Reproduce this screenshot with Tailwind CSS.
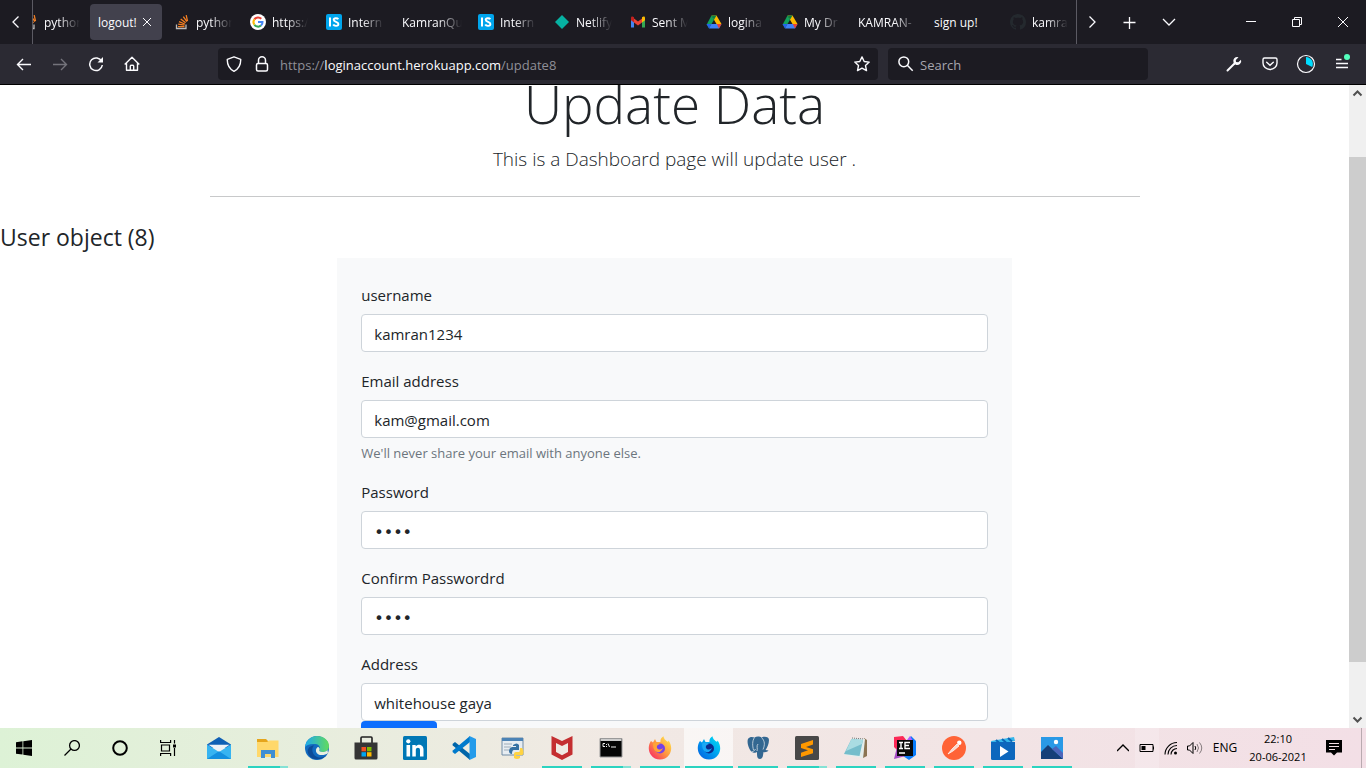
<!DOCTYPE html>
<html lang="en">
<head>
<meta charset="utf-8">
<meta name="viewport" content="width=device-width, initial-scale=1">
<title>Update Data</title>
<script src="https://cdn.jsdelivr.net/npm/@tailwindcss/browser@4"></script>
</head>
<body class="flex h-screen flex-col overflow-hidden bg-white font-['Open_Sans','Noto_Sans',sans-serif] text-[#212529]">

<!-- shared symbols -->
<svg class="hidden" aria-hidden="true">
  <symbol id="so" viewBox="0 0 16 16"><path d="M2.500 10.500v4h9.500v-4" fill="none" stroke="#bcbbbb" stroke-width="1.300"/><path d="M4 12.600h6.500M4.200 10.200l6.300.9M5 7.600l5.800 2.400M6.700 4.900l4.900 3.900M9.300 2.600l3.600 5M12.200 1.200l1.300 6" stroke="#f48024" stroke-width="1.300" fill="none"/></symbol>
  <symbol id="is" viewBox="0 0 16 16"><rect width="16" height="16" rx="2" fill="#00a5ec"/><path d="M4 3.500v9" stroke="#fff" stroke-width="2"/><path d="M12.300 5.200C11.500 3.900 7.700 3.600 7.700 5.800c0 2.500 4.700 1.500 4.700 4.200 0 2.400-4.200 2.300-5.200.6" stroke="#fff" stroke-width="1.900" fill="none"/></symbol>
  <symbol id="drive" viewBox="0 0 16 16"><path d="M5.500 1.500h5l5 8.500h-5z" fill="#ffba00"/><path d="M5.500 1.500L8 5.700 3 14.300.7 10.500z" fill="#12a15c"/><path d="M5.300 10h10.200L13 14.500H3z" fill="#3f83f8"/><path d="M5.500 1.500h5L8 5.700z" fill="#0b8043"/><path d="M10.800 10h4.700L13 14.500z" fill="#ea4335"/><path d="M3 14.500L5.400 10H.5z" fill="#2563eb"/></symbol>
</svg>

<header class="shrink-0 border-b border-black bg-[#2b2a33] text-[#fbfbfe]">
  <div class="flex h-11 items-stretch bg-[#1c1b22] text-xs">
    <button class="flex w-[33px] shrink-0 items-center justify-center border-r border-[#5b5a63]" aria-label="Scroll tabs left"><svg class="h-4 w-4" viewBox="0 0 16 16" fill="none" stroke="currentColor" stroke-width="1.300"><path d="M10.500 2.500L5 8l5.500 5.500"/></svg></button>
    <nav class="min-w-0 flex-1 overflow-hidden" aria-label="Tabs">
      <div class="-ml-[19px] flex h-full items-center gap-1">
        <button class="flex h-9 w-[72px] shrink-0 items-center gap-1.5 pl-2"><svg class="h-4 w-4 shrink-0"><use href="#so"/></svg><span class="w-9 overflow-hidden whitespace-nowrap pt-0.5 text-left mask-r-from-40%">python</span></button>
        <button class="flex h-9 w-[72px] shrink-0 items-center gap-1 rounded bg-[#42414d] pl-2"><span class="whitespace-nowrap pt-0.5">logout!</span><svg class="h-3 w-3 shrink-0" viewBox="0 0 12 12" stroke="currentColor"><path d="M2 2l8 8M10 2l-8 8"/></svg></button>
        <button class="flex h-9 w-[72px] shrink-0 items-center gap-1.5 pl-2"><svg class="h-4 w-4 shrink-0"><use href="#so"/></svg><span class="w-9 overflow-hidden whitespace-nowrap pt-0.5 text-left mask-r-from-40%">python</span></button>
        <button class="flex h-9 w-[72px] shrink-0 items-center gap-1.5 pl-2"><svg class="h-4 w-4 shrink-0" viewBox="0 0 16 16"><circle cx="8" cy="8" r="8" fill="#fff"/><g fill="none" stroke-width="2"><path d="M4.400 5.300A4.500 4.500 0 0 1 11.300 4.800" stroke="#ea4335"/><path d="M4.400 5.300a4.500 4.500 0 0 0 0 5.400" stroke="#fbbc05"/><path d="M4.400 10.700a4.500 4.500 0 0 0 6.600.9" stroke="#34a853"/><path d="M11 11.600A4.500 4.500 0 0 0 12.500 8H8" stroke="#4285f4"/></g></svg><span class="w-9 overflow-hidden whitespace-nowrap pt-0.5 text-left mask-r-from-40%">https:/</span></button>
        <button class="flex h-9 w-[72px] shrink-0 items-center gap-1.5 pl-2"><svg class="h-4 w-4 shrink-0"><use href="#is"/></svg><span class="w-9 overflow-hidden whitespace-nowrap pt-0.5 text-left mask-r-from-40%">Intern</span></button>
        <button class="flex h-9 w-[72px] shrink-0 items-center pl-2"><span class="w-[60px] overflow-hidden whitespace-nowrap pt-0.5 text-left mask-r-from-60%">KamranQu</span></button>
        <button class="flex h-9 w-[72px] shrink-0 items-center gap-1.5 pl-2"><svg class="h-4 w-4 shrink-0"><use href="#is"/></svg><span class="w-9 overflow-hidden whitespace-nowrap pt-0.5 text-left mask-r-from-40%">Intern</span></button>
        <button class="flex h-9 w-[72px] shrink-0 items-center gap-1.5 pl-2"><svg class="h-4 w-4 shrink-0" viewBox="0 0 16 16"><path d="M8 1l7 7-7 7-7-7z" fill="#06b2a2"/></svg><span class="w-9 overflow-hidden whitespace-nowrap pt-0.5 text-left mask-r-from-40%">Netlify</span></button>
        <button class="flex h-9 w-[72px] shrink-0 items-center gap-1.5 pl-2"><svg class="h-4 w-4 shrink-0" viewBox="0 0 16 16"><path d="M1 4v9.500h3V6z" fill="#4285f4"/><path d="M12 6v7.500h3V4z" fill="#34a853"/><path d="M4 4.500l4 3 4-3V8.500l-4 3-4-3z" fill="#ea4335"/><path d="M1 4c0-1.600 1.600-1.900 3-.8v5.300L1 6.300z" fill="#c5221f"/><path d="M15 4c0-1.600-1.600-1.900-3-.8v5.300l3-2.200z" fill="#fbbc04"/></svg><span class="w-9 overflow-hidden whitespace-nowrap pt-0.5 text-left mask-r-from-40%">Sent M</span></button>
        <button class="flex h-9 w-[72px] shrink-0 items-center gap-1.5 pl-2"><svg class="h-4 w-4 shrink-0"><use href="#drive"/></svg><span class="w-9 overflow-hidden whitespace-nowrap pt-0.5 text-left mask-r-from-40%">logina</span></button>
        <button class="flex h-9 w-[72px] shrink-0 items-center gap-1.5 pl-2"><svg class="h-4 w-4 shrink-0"><use href="#drive"/></svg><span class="w-9 overflow-hidden whitespace-nowrap pt-0.5 text-left mask-r-from-40%">My Dr</span></button>
        <button class="flex h-9 w-[72px] shrink-0 items-center pl-2"><span class="w-[60px] overflow-hidden whitespace-nowrap pt-0.5 text-left mask-r-from-60%">KAMRAN-</span></button>
        <button class="flex h-9 w-[72px] shrink-0 items-center pl-2"><span class="whitespace-nowrap pt-0.5">sign up!</span></button>
        <button class="flex h-9 w-[72px] shrink-0 items-center gap-1.5 pl-2"><svg class="h-4 w-4 shrink-0" viewBox="0 0 16 16"><path fill="#24292e" d="M8 0C3.580 0 0 3.580 0 8c0 3.540 2.290 6.530 5.470 7.590.4.070.550-.170.550-.380 0-.190-.010-.820-.010-1.490-2.010.370-2.530-.490-2.690-.940-.090-.230-.480-.940-.820-1.130-.280-.150-.680-.520-.010-.530.630-.010 1.080.580 1.230.820.720 1.210 1.870.870 2.330.660.070-.520.280-.870.510-1.070-1.780-.2-3.640-.890-3.640-3.950 0-.870.310-1.590.820-2.150-.080-.2-.360-1.020.080-2.120 0 0 .670-.210 2.200.820.640-.180 1.320-.270 2-.270s1.360.090 2 .270c1.530-1.040 2.200-.820 2.200-.820.440 1.100.160 1.920.080 2.120.510.560.820 1.270.820 2.150 0 3.070-1.870 3.750-3.650 3.950.290.250.540.730.540 1.480 0 1.070-.010 1.930-.010 2.200 0 .210.150.460.550.380A8 8 0 0 0 16 8c0-4.420-3.580-8-8-8z"/></svg><span class="w-9 overflow-hidden whitespace-nowrap pt-0.5 text-left mask-r-from-40%">kamra</span></button>
      </div>
    </nav>
    <div class="flex shrink-0 border-l border-[#5b5a63] pr-0.5">
      <button class="flex w-[30px] items-center justify-center" aria-label="Scroll tabs right"><svg class="h-4 w-4" viewBox="0 0 16 16" fill="none" stroke="currentColor" stroke-width="1.300"><path d="M5.500 2.500L11 8l-5.500 5.500"/></svg></button>
      <button class="ml-0.5 flex w-10 items-center justify-center" aria-label="New tab"><svg class="h-4 w-4" viewBox="0 0 16 16" stroke="currentColor" stroke-width="1.300"><path d="M8.500 3v12M2.500 8.500h12"/></svg></button>
      <button class="flex w-10 items-center justify-center" aria-label="List all tabs"><svg class="h-4 w-4" viewBox="0 0 16 16" fill="none" stroke="currentColor" stroke-width="1.300"><path d="M2 5l6 6 6-6"/></svg></button>
      <button class="ml-[37px] flex w-[46px] items-center justify-center pl-1" aria-label="Minimize"><svg class="h-3 w-3" viewBox="0 0 12 12" stroke="currentColor"><path d="M1 5.500h10"/></svg></button>
      <button class="flex w-[46px] items-center justify-center pl-1" aria-label="Restore"><svg class="h-3 w-3" viewBox="0 0 12 12" fill="none" stroke="currentColor"><path d="M1.500 3.500h7v7h-7zM3.500 3.500v-2h7v7h-2"/></svg></button>
      <button class="flex w-[46px] items-center justify-center pl-1" aria-label="Close"><svg class="h-3 w-3" viewBox="0 0 12 12" stroke="currentColor"><path d="M1 1l10 10M11 1L1 11"/></svg></button>
    </div>
  </div>

  <div class="flex h-10 items-center">
    <div class="flex w-[218px] shrink-0 gap-5 pl-4">
      <button aria-label="Back"><svg class="h-4 w-4" viewBox="0 0 16 16" fill="none" stroke="currentColor" stroke-width="1.400"><path d="M15 8.500H2M7 3L1.500 8.500 7 14"/></svg></button>
      <button class="text-[#74737b]" aria-label="Forward"><svg class="h-4 w-4" viewBox="0 0 16 16" fill="none" stroke="currentColor" stroke-width="1.400"><path d="M1 8.500h13M9 3l5.500 5.500L9 14"/></svg></button>
      <button aria-label="Reload"><svg class="h-4 w-4" viewBox="0 0 16 16" fill="none" stroke="currentColor" stroke-width="1.500"><path d="M13.700 5.500A6.300 6.300 0 1 0 14.300 9"/><path d="M15 1v5.500H9.500z" fill="currentColor" stroke="none"/></svg></button>
      <button aria-label="Home"><svg class="h-4 w-4" viewBox="0 0 16 16" fill="none" stroke="currentColor" stroke-width="1.400" stroke-linejoin="round"><path d="M.7 8.500L8 1.300l7.300 7.200M2.500 7v7.300h11V7M6.300 14V10c0-1 3.400-1 3.400 0v4"/></svg></button>
    </div>
    <div class="flex h-8 min-w-0 flex-1 items-center rounded bg-[#1c1b22] px-2">
      <svg class="mr-3 h-4 w-4 shrink-0" viewBox="0 0 16 16" fill="none" stroke="currentColor" stroke-width="1.400" stroke-linejoin="round"><path d="M8 .8l6.700 2.500C14.900 8.500 13 12.800 8 15.300 3 12.800 1.100 8.500 1.300 3.300z"/></svg>
      <svg class="mr-2.5 h-4 w-4 shrink-0" viewBox="0 0 16 16" fill="none" stroke="currentColor" stroke-width="1.500"><rect x="2.500" y="7.500" width="11" height="7.500" rx="1.500"/><path d="M4.500 7.500V4.300a3.500 3.500 0 0 1 7 0v3.200"/></svg>
      <a href="#" class="min-w-0 flex-1 truncate pt-[3px] text-[13px] text-[#8f8f98]">https://<span class="text-[#fbfbfe]">loginaccount.herokuapp.com</span>/update8</a>
      <button aria-label="Bookmark"><svg class="h-4 w-4" viewBox="0 0 16 16" fill="none" stroke="currentColor" stroke-width="1.400" stroke-linejoin="round"><path d="M8 .9l2.200 4.600 5 .6-3.700 3.500 1 5L8 12.200l-4.500 2.400 1-5L.8 6.100l5-.6z"/></svg></button>
    </div>
    <label class="ml-2.5 flex h-8 w-[260px] shrink-0 items-center gap-1.5 rounded bg-[#1c1b22] px-2.5">
      <svg class="h-4 w-4 shrink-0" viewBox="0 0 16 16" fill="none" stroke="currentColor" stroke-width="1.500"><circle cx="5.800" cy="5.800" r="4.900"/><path d="M9.300 9.300l5.400 5.400"/></svg>
      <input type="text" aria-label="Search" placeholder="Search" class="w-full min-w-0 bg-transparent pt-[3px] text-[13px] text-white outline-none placeholder:text-[#a6a6ae]">
    </label>
    <div class="ml-[78px] flex shrink-0 items-center gap-5 pr-4">
      <button aria-label="Developer tools"><svg class="h-4 w-4" viewBox="0 0 16 16"><path d="M1.500 14.500l7-7" stroke="currentColor" stroke-width="2" stroke-linecap="round"/><path d="M12.500 1.200a4 4 0 0 0-5 5.300l2.200 2.200a4 4 0 0 0 5.300-5L12.300 6.200 10 5.900l-.2-2z" fill="currentColor"/></svg></button>
      <button aria-label="Save to Pocket"><svg class="h-4 w-4" viewBox="0 0 16 16" fill="none" stroke="currentColor" stroke-width="1.400" stroke-linecap="round"><path d="M2.500 2h11A1.500 1.500 0 0 1 15 3.500V7A7 6.500 0 0 1 1 7V3.500A1.500 1.500 0 0 1 2.500 2z"/><path d="M4.700 6.300L8 9.300l3.300-3"/></svg></button>
      <button class="-mx-0.5" aria-label="Account"><svg class="h-5 w-5" viewBox="0 0 20 20"><circle cx="10" cy="10" r="8.500" fill="none" stroke="currentColor" stroke-width="1.200"/><path d="M10 10V3a7 7 0 0 1 6.200 10z" fill="#00ddff"/></svg></button>
      <button class="relative" aria-label="Menu"><svg class="h-4 w-4" viewBox="0 0 16 16" stroke="currentColor" stroke-width="1.300"><path d="M2 3.500h5.500M2 7.500h12M2 11.500h12"/></svg><span class="absolute -top-0.5 right-0 h-1.5 w-1.5 rounded-full bg-[#54ffbd]"></span></button>
    </div>
  </div>
</header>

<div class="flex min-h-0 flex-1">
  <main class="min-w-0 flex-1 overflow-hidden">
    <section class="mx-auto -mt-4 max-w-[930px] border-b border-[#c8c9ca] pb-[22px] text-center font-light">
      <h1 class="mb-2 pt-0.5 text-[53px] leading-[65px]">Update Data</h1>
      <p class="text-[19px] leading-[30px]">This is a Dashboard page will update user .</p>
    </section>
    <h2 class="mt-[26px] mb-1.5 text-[23px] leading-[29px]">User object (8)</h2>
    <form class="mx-auto flex w-1/2 flex-col gap-[17px] bg-[#f8f9fa] px-6 pt-[25px] pb-6 text-[15px] leading-6">
      <div class="flex flex-col gap-[7px]">
        <label for="username">username</label>
        <input id="username" type="text" value="kamran1234" class="h-[38px] rounded border border-[#ced4da] bg-white px-3 pt-0.5">
      </div>
      <div class="flex flex-col gap-[7px]">
        <label for="email">Email address</label>
        <input id="email" type="email" value="kam@gmail.com" aria-describedby="help" class="h-[38px] rounded border border-[#ced4da] bg-white px-3 pt-0.5">
        <p id="help" class="-mt-0.5 text-[13px] leading-5 text-[#6c757d]">We'll never share your email with anyone else.</p>
      </div>
      <div class="flex flex-col gap-[7px]">
        <label for="pw">Password</label>
        <input id="pw" type="password" value="1234" class="h-[38px] rounded border border-[#ced4da] bg-white px-3 pt-1 font-['DejaVu_Sans',sans-serif] text-base">
      </div>
      <div class="flex flex-col gap-[7px]">
        <label for="pw2">Confirm Passwordrd</label>
        <input id="pw2" type="password" value="1234" class="h-[38px] rounded border border-[#ced4da] bg-white px-3 pt-1 font-['DejaVu_Sans',sans-serif] text-base">
      </div>
      <div class="flex flex-col">
        <label for="address" class="mb-[7px]">Address</label>
        <input id="address" type="text" value="whitehouse gaya" class="h-[38px] rounded border border-[#ced4da] bg-white px-3 pt-0.5">
        <button type="submit" aria-label="Update" class="h-[38px] w-[76px] rounded bg-[#0d6efd]"></button>
      </div>
    </form>
  </main>
  <div class="flex w-[17px] shrink-0 flex-col items-center bg-[#f0f0f0] text-[#505050]" aria-hidden="true">
    <svg class="h-[17px] w-[17px] shrink-0" viewBox="0 0 17 17" fill="none" stroke="currentColor" stroke-width="2"><path d="M4.500 10.500l4-4 4 4"/></svg>
    <div class="flex w-full flex-1 flex-col"><div class="h-[9%]"></div><div class="h-[83%] bg-[#cdcdcd]"></div></div>
    <svg class="h-[17px] w-[17px] shrink-0" viewBox="0 0 17 17" fill="none" stroke="currentColor" stroke-width="2"><path d="M4.500 6.500l4 4 4-4"/></svg>
  </div>
</div>

<footer class="flex h-10 shrink-0 items-stretch bg-linear-to-r from-[#ddf2d6] via-[#f1e9e4] via-45% to-[#f3dfe6] text-black">
  <button class="flex w-12 items-center justify-center" aria-label="Start"><svg class="h-4 w-4" viewBox="0 0 16 16"><path d="M0 2.300L6.500 1.300v6.200H0zM7.300 1.200L16 0v7.500H7.300zM0 8.400h6.500v6.200L0 13.700zM7.300 8.400H16V16l-8.700-1.200z"/></svg></button>
  <button class="flex w-12 items-center justify-center" aria-label="Search"><svg class="h-4 w-4" viewBox="0 0 16 16" fill="none" stroke="currentColor" stroke-width="1.300"><circle cx="10.500" cy="5.500" r="4.900"/><path d="M7 9L.5 15.500"/></svg></button>
  <button class="flex w-12 items-center justify-center" aria-label="Cortana"><svg class="h-4 w-4" viewBox="0 0 16 16" fill="none" stroke="currentColor" stroke-width="2"><circle cx="8" cy="8" r="6.800"/></svg></button>
  <button class="flex w-12 items-center justify-center" aria-label="Task view"><svg class="h-4 w-4" viewBox="0 0 16 16" fill="none" stroke="currentColor" stroke-width="1.200"><path d="M.6 0v2.500h10V0M1.500 5h8v6h-8zM.6 16v-2.500h10V16M14.500 0v3.500M14.500 8v8"/><path d="M13 4.500h3v3h-3z" fill="currentColor" stroke="none"/></svg></button>

  <div class="ml-0.5 flex">
  <button class="flex w-[49px] items-center justify-center" aria-label="Mail"><svg class="h-6 w-6" viewBox="0 0 24 24"><path d="M0 8.500L12 1l12 7.500V12H0z" fill="#0f5fb5"/><path d="M1.500 8.800h21L12 16z" fill="#eef1f7"/><path d="M0 8.500L12 16l12-7.500V23H0z" fill="#37b4f1"/><path d="M0 23l12-7.800L24 23z" fill="#1490df"/></svg></button>
  <button class="relative flex w-[49px] items-center justify-center" aria-label="File Explorer"><svg class="h-6 w-6" viewBox="0 0 24 24"><path d="M1 3h9l2 2h10v16H1z" fill="#e5a51c"/><path d="M1 6h10l2-1.500h9.500V21H1z" fill="#ffd86b"/><path d="M5 22v-8h14v8h-4v-4H9v4z" fill="#3f8fd3"/></svg><span class="absolute bottom-0 h-0.5 w-10 bg-linear-to-r from-[#2bd3c0] from-80% to-[#84e2d5] to-80%"></span></button>
  <button class="flex w-[49px] items-center justify-center" aria-label="Edge"><svg class="h-6 w-6" viewBox="0 0 24 24"><defs><linearGradient id="e1"><stop stop-color="#1ca9ee"/><stop offset="1" stop-color="#62db5c"/></linearGradient></defs><circle cx="12" cy="12" r="12" fill="#126bc0"/><path d="M0 11C1 4 6 0 12 0c7 0 12 4.500 12 10 0 4-3 6-6.500 6-2.500 0-4-1-3-2.500 1-2 0-5-4-5.500C5 7.500 1 9 0 11z" fill="url(#e1)"/><path d="M9 9.500c-3 3-2 9.500 3 11.500 4 1.500 8 0 10.500-3C18 24.500 6 26 3 17c-1.500-4 2-7.500 6-7.500z" fill="#0c4b98"/><path d="M14.500 13.500c-1 1.500.5 2.500 3 2.500 2 0 3.800-.5 5-2l.5 3c-3.500 3-11 3-12-1.500-.5-2.500 1-4 2-4.500 1 .3 2 1.300 1.500 2.500z" fill="#e9efe1"/></svg></button>
  <button class="flex w-[49px] items-center justify-center" aria-label="Store"><svg class="h-6 w-6" viewBox="0 0 24 24"><path d="M7 8V2Q7 1 8 1h9q1 0 1 1v6" fill="none" stroke="#202020" stroke-width="1.600"/><path d="M.5 6.500h23V22q0 1.500-1.500 1.500H2Q.5 23.500.5 22z" fill="#353535"/><path d="M7.500 11H12v4.300H7.500z" fill="#f25022"/><path d="M13 11h4.500v4.300H13z" fill="#7fba00"/><path d="M7.500 16.200H12v4.300H7.500z" fill="#00a4ef"/><path d="M13 16.200h4.500v4.300H13z" fill="#ffb900"/></svg></button>
  <button class="flex w-[49px] items-center justify-center" aria-label="LinkedIn"><svg class="h-6 w-6" viewBox="0 0 24 24"><rect width="24" height="24" rx="1.500" fill="#0077b5"/><circle cx="5.300" cy="5.300" r="2.100" fill="#fff"/><path d="M3.500 9h3.600v11.500H3.500zM9.300 9h3.400v1.600c1.700-3 7.800-2.600 7.800 2.900v7H17v-6.300c0-3.200-4.200-3-4.200 0v6.300H9.300z" fill="#fff"/></svg></button>
  <button class="flex w-[49px] items-center justify-center" aria-label="Visual Studio Code"><svg class="h-6 w-6" viewBox="0 0 24 24"><path d="M.5 8L3 6l15 12v6L.8 9.500z" fill="#0065a9"/><path d="M.5 16L3 18 18 6V0L.8 14.500z" fill="#007acc"/><path d="M17.500 0L24 3v18l-6.500 3z" fill="#249bea"/></svg></button>
  <button class="flex w-[49px] items-center justify-center" aria-label="Python IDLE"><svg class="h-6 w-6" viewBox="0 0 24 24"><path d="M1 2h21v17H1z" fill="#e7edf2" stroke="#718ca6"/><path d="M1 2h21v3H1z" fill="#4c83b5"/><path d="M3 8h8M3 11h7M3 14h5" stroke="#9eacb8"/><path d="M12 9q4-3 6 0v5h-5q-2 0-2 4-3 0-3-3t3-4h4v-1h-3z" fill="#3571a3"/><path d="M19 12h2q2 2 1.500 5T19 19h-4v1h4v2q-3 2-6 0v-4q0-2 2-2h3q1 0 1-4z" fill="#ffd342"/></svg></button>
  <button class="relative flex w-[49px] items-center justify-center" aria-label="McAfee"><svg class="h-6 w-6" viewBox="0 0 24 24"><path d="M1.500 0L12 5l10.500-5v18.500L12 24 1.500 18.500zM6 7v9l6 3.200L18 16V7l-6 3z" fill="#c42e30" fill-rule="evenodd"/></svg><span class="absolute bottom-0 h-0.5 w-10 bg-[#2bd3c0]"></span></button>
  <button class="relative flex w-[49px] items-center justify-center" aria-label="Command Prompt"><svg class="h-6 w-6" viewBox="0 0 24 24"><path d="M1 2.500h22v18.500H1z" fill="#050505" stroke="#9a9a9a"/><path d="M1.500 3h21v2h-21z" fill="#ccc"/><path d="M6 7.500H4v3h2M7.500 8v1M7.500 10v1M9 7.500l1.500 3.500M12 11h5" stroke="#eee" fill="none"/></svg><span class="absolute bottom-0 h-0.5 w-10 bg-linear-to-r from-[#2bd3c0] from-80% to-[#84e2d5] to-80%"></span></button>
  <button class="relative flex w-[49px] items-center justify-center" aria-label="Firefox"><svg class="h-6 w-6" viewBox="0 0 24 24"><defs><linearGradient id="f1" x1="1" x2="0" y1="0" y2="1"><stop stop-color="#fff44f"/><stop offset=".5" stop-color="#ff9640"/><stop offset="1" stop-color="#f5156c"/></linearGradient></defs><path d="M3 5l2 1.500L7 3l1.500 3 4 0C12 3 14 1 15.500.3 16 4 19 5 20 6l.5-1.500C24 9 24 15 21 19c-4 6-14 6-18 0C0 15 0 9 3 5z" fill="url(#f1)"/><circle cx="12" cy="12.500" r="5" fill="#7542e5"/><path d="M5 7.500q4-2 7 .5-4 1-3 4 2 3 6 0-2 5-6 4T5 7.500z" fill="#ffa436"/></svg><span class="absolute bottom-0 h-0.5 w-10 bg-[#2bd3c0]"></span></button>
  <button class="relative flex w-[49px] items-center justify-center bg-white/60" aria-label="Firefox Developer Edition"><svg class="h-6 w-6" viewBox="0 0 24 24"><defs><linearGradient id="f2" x1="1" x2="0" y1="0" y2="1"><stop stop-color="#00e7f5"/><stop offset=".6" stop-color="#0090ed"/><stop offset="1" stop-color="#055bdc"/></linearGradient></defs><path d="M3 5l2 1.500L7 3l1.500 3 4 0C12 3 14 1 15.500.3 16 4 19 5 20 6l.5-1.500C24 9 24 15 21 19c-4 6-14 6-18 0C0 15 0 9 3 5z" fill="url(#f2)"/><circle cx="12" cy="12.500" r="5" fill="#0b2b8c"/><path d="M5 7.500q4-2 7 .5-4 1-3 4 2 3 6 0-2 5-6 4T5 7.500z" fill="#1ba8f5"/></svg><span class="absolute bottom-0 h-0.5 w-12 bg-[#2bd3c0]"></span></button>
  <button class="relative flex w-[49px] items-center justify-center" aria-label="PostgreSQL"><svg class="h-6 w-6" viewBox="0 0 24 24"><path d="M2 3C4 0 7 1 8.500 1.500 11 0 14 .5 15.500 1.500 19 0 23 1 23 4c0 4-2 8-3.500 10l3 .5c-1 1.500-3.500 2-5 1.500-.5 3-.5 7-3.500 7s-3-3-3-7c-1 1-4 1-5 0C3 14 .5 6 2 3z" fill="#336791"/><path d="M8.500 1.500C6 5 6.500 10 7.500 14M15.500 1.500C19 5 19 9 17 13.500M11 15c1-2-1-5 1-7M5.500 16c2-1 3-1 4-3" fill="none" stroke="#dbe2e9" stroke-width=".8"/></svg><span class="absolute bottom-0 h-0.5 w-10 bg-[#2bd3c0]"></span></button>
  <button class="relative flex w-[49px] items-center justify-center" aria-label="Sublime Text"><svg class="h-6 w-6" viewBox="0 0 24 24"><rect width="24" height="24" rx="1.500" fill="#484848"/><path d="M18 4v4.500L11 11l7 2.300v4L6 21v-4.300l7-2.400-7-2.200V8z" fill="#ff9800"/></svg><span class="absolute bottom-0 h-0.5 w-10 bg-linear-to-r from-[#2bd3c0] from-80% to-[#84e2d5] to-80%"></span></button>
  <button class="relative flex w-[49px] items-center justify-center" aria-label="Notepad"><svg class="h-6 w-6" viewBox="0 0 24 24"><path d="M20 2l3 2v16l-4 2z" fill="#8b7453"/><path d="M8 2l13 1-2 19-18-3z" fill="#e3edec"/><path d="M7.500 3L19 4l-3.500 16L0 18z" fill="#75bdcb"/><path d="M7.500 3L19 4l-1 4L2 15z" fill="#a9dce2"/><path d="M8 2l12 1" stroke="#777" stroke-dasharray="1 1"/></svg><span class="absolute bottom-0 h-0.5 w-10 bg-[#2bd3c0]"></span></button>
  <button class="relative flex w-[49px] items-center justify-center" aria-label="IntelliJ IDEA"><svg class="h-6 w-6" viewBox="0 0 24 24"><path d="M1 1l9-1 4 5-10 9-3-3z" fill="#fc2856"/><path d="M14 5l4-5 5 5v14l-7 5-6-4z" fill="#087cfa"/><path d="M14 4l3-4 3 5v4z" fill="#b05cff"/><path d="M1 23l3-12 9 9z" fill="#a64cc4"/><path d="M4 4h16v16H4z" fill="#080808"/><path d="M6 6.500h4M8 6.500v6M6 12.500h4M17 6.500h-5v6h5M12 9.500h4M6 17h6" stroke="#fff" stroke-width="1.400" fill="none"/></svg><span class="absolute bottom-0 h-0.5 w-10 bg-[#2bd3c0]"></span></button>
  <button class="relative flex w-[49px] items-center justify-center" aria-label="Postman"><svg class="h-6 w-6" viewBox="0 0 24 24"><circle cx="12" cy="12" r="12" fill="#ff6336"/><path d="M6 18l4-5 5-5 2 2-6 5z" fill="#f8d8cc" stroke="#fff" stroke-width=".7"/><circle cx="17.300" cy="6.800" r="2.200" fill="#fff"/></svg><span class="absolute bottom-0 h-0.5 w-10 bg-[#2bd3c0]"></span></button>
  <button class="relative flex w-[49px] items-center justify-center" aria-label="Movies &amp; TV"><svg class="h-6 w-6" viewBox="0 0 24 24"><path d="M0 5L23 1l1 4-23 4z" fill="#34b6eb"/><path d="M5 4l4 3.500M11 3l4 3.500M17 2l4 3.500" stroke="#0b65b5" stroke-width="2"/><path d="M0 6h24v16.500q0 1.500-1.500 1.500h-21Q0 24 0 22.500z" fill="#0d67bd"/><path d="M9 10v11l8.500-5.500z" fill="#fff"/></svg><span class="absolute bottom-0 h-0.5 w-10 bg-[#2bd3c0]"></span></button>
  <button class="relative flex w-[49px] items-center justify-center" aria-label="Photos"><svg class="h-6 w-6" viewBox="0 0 24 24"><path d="M1 1h22v22H1z" fill="#2999e6"/><path d="M1 16l7-7 15 14H1z" fill="#163f78"/><path d="M12 13l4-3 7 7v6z" fill="#4d65b9"/><circle cx="16" cy="6" r="2.200" fill="#fff"/></svg><span class="absolute bottom-0 h-0.5 w-10 bg-[#2bd3c0]"></span></button>
  </div>

  <div class="ml-auto flex items-center">
    <button class="flex w-6 items-center justify-center" aria-label="Show hidden icons"><svg class="h-3 w-3" viewBox="0 0 12 12" fill="none" stroke="currentColor" stroke-width="1.400"><path d="M0 9l6-6 6 6"/></svg></button>
    <button class="flex h-full w-6 items-center justify-center bg-white/20" aria-label="Battery"><svg class="h-4 w-4" viewBox="0 0 16 16"><path d="M1 4.500h13v7H1zM14.500 6.500v3" fill="none" stroke="currentColor"/><path d="M2.500 6h4v4h-4z"/></svg></button>
    <button class="flex w-6 items-center justify-center" aria-label="Network"><svg class="h-4 w-4" viewBox="0 0 16 16" fill="none" stroke="currentColor" stroke-width="1.100"><path d="M2 14.500A12 12 0 0 1 14 2.500M5 14.500a9 9 0 0 1 9-9M8 14.500a6 6 0 0 1 6-6"/><circle cx="12.500" cy="13" r="1.500" fill="currentColor" stroke="none"/></svg></button>
    <button class="flex w-6 items-center justify-center" aria-label="Volume"><svg class="h-4 w-4" viewBox="0 0 16 16" fill="none" stroke="currentColor"><path d="M.5 6h2L6 2.500v11L2.500 10h-2z"/><path d="M8 6q1.500 2 0 4"/><path d="M10 4q3 4 0 8M12.500 2.500q4.500 5.500 0 11" opacity=".45"/></svg></button>
    <button class="w-9 text-center text-xs" aria-label="Language">ENG</button>
    <button class="w-[70px] text-center text-[11px] leading-[18px]">22:10<br>20-06-2021</button>
    <button class="flex w-[42px] items-center justify-center" aria-label="Notifications"><svg class="h-4 w-4" viewBox="0 0 16 16"><path d="M0 0h16v12.500h-5L8 15.500l-3-3H0z"/><path d="M3 3.500h10M3 6.500h10M3 9.500h6" stroke="#f3dfe6"/></svg></button>
    <div class="mr-1 ml-1.5 h-full w-px bg-[#b9aab0]"></div>
  </div>
</footer>
</body>
</html>
